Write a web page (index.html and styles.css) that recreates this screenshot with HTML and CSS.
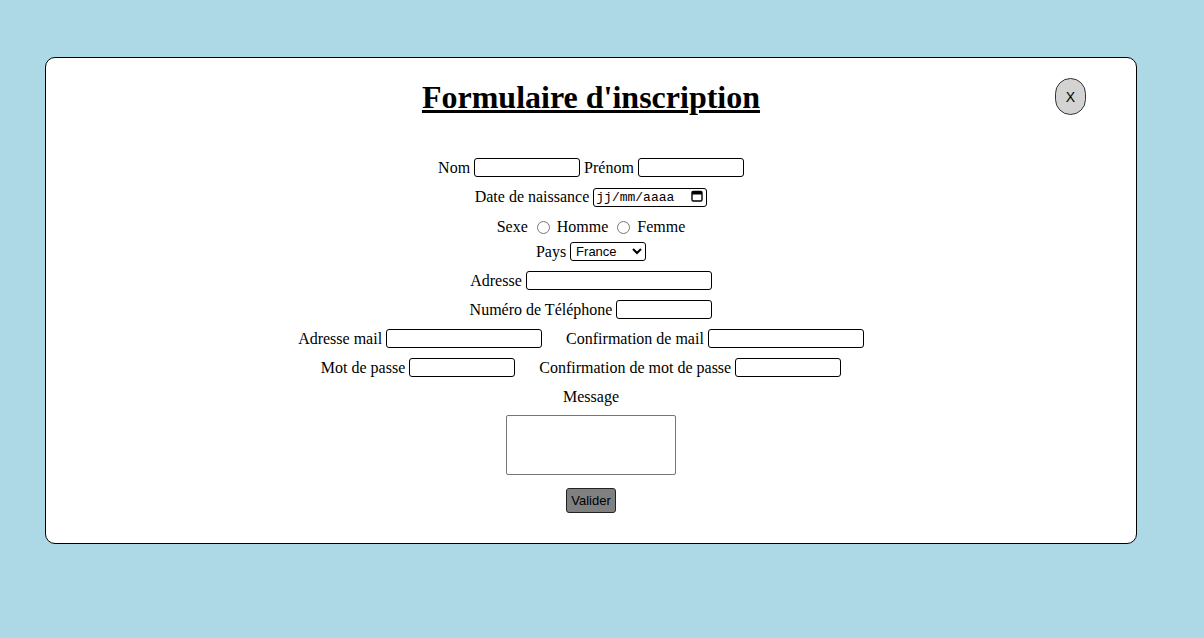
FILE: index.html
```html
<!DOCTYPE html>
<html lang="fr">
<head>
<meta charset="utf-8">
<title>Formulaire d'inscription</title>
<link rel="stylesheet" href="styles.css">
</head>
<body>
<div class="modal">
  <button class="close" type="button">X</button>
  <h1 class="title">Formulaire d'inscription</h1>
  <form class="form">
    <div class="row">
      <label for="nom">Nom</label><input id="nom" class="field w106" type="text">
      <label for="prenom">Prénom</label><input id="prenom" class="field w106" type="text">
    </div>
    <div class="row">
      <label for="naissance">Date de naissance</label>
      <span class="date-field">
        <input id="naissance" class="field date-input" type="text" value="jj/mm/aaaa">
        <svg class="cal" width="12" height="12" viewBox="0 0 12 12" aria-hidden="true"><rect x="1" y="1.5" width="10" height="9.5" rx="1.2" fill="none" stroke="#000" stroke-width="1.4"/><rect x="1" y="1.5" width="10" height="3" fill="#000"/></svg>
      </span>
    </div>
    <div class="row row-sexe">
      <span>Sexe</span>
      <input type="radio" name="sexe" id="homme"><label for="homme">Homme</label>
      <input type="radio" name="sexe" id="femme"><label for="femme">Femme</label>
    </div>
    <div class="row row-pays">
      <label for="pays">Pays</label>
      <select id="pays" class="select"><option>France</option><option>Belgique</option><option>Suisse</option></select>
    </div>
    <div class="row">
      <label for="adresse">Adresse</label><input id="adresse" class="field w186" type="text">
    </div>
    <div class="row">
      <label for="tel">Numéro de Téléphone</label><input id="tel" class="field w96" type="tel">
    </div>
    <div class="row">
      <label for="mail">Adresse mail</label><input id="mail" class="field w156" type="email">
      <label for="mail2" class="spaced">Confirmation de mail</label><input id="mail2" class="field w156 trail" type="email">
    </div>
    <div class="row">
      <label for="mdp">Mot de passe</label><input id="mdp" class="field w106" type="password">
      <label for="mdp2" class="spaced">Confirmation de mot de passe</label><input id="mdp2" class="field w106 trail" type="password">
    </div>
    <div class="row">
      <label for="message">Message</label>
    </div>
    <div class="row-area">
      <textarea id="message" class="area"></textarea>
    </div>
    <div class="row-btn">
      <button type="submit" class="submit">Valider</button>
    </div>
  </form>
</div>
</body>
</html>
```
FILE: styles.css
```css
html, body {
  margin: 0;
  padding: 0;
}
body {
  background: #add8e6;
  font-family: "Liberation Serif", "Times New Roman", serif;
  font-size: 16px;
  color: #000;
}
.modal {
  position: relative;
  box-sizing: border-box;
  width: 1092px;
  height: 487px;
  margin: 57px 0 0 45px;
  background: #fff;
  border: 1px solid #000;
  border-radius: 10px;
}
.close {
  position: absolute;
  top: 20px;
  right: 50px;
  width: 31px;
  height: 37px;
  padding: 0;
  background: #d3d3d3;
  border: 1px solid #333;
  border-radius: 16px;
  font-family: "Liberation Sans", Arial, sans-serif;
  font-size: 14px;
  color: #000;
}
.title {
  margin: 21px 0 0;
  font-size: 32px;
  font-weight: bold;
  text-align: center;
  text-decoration: underline;
  line-height: 37px;
}
.form {
  margin-top: 41px;
  display: flex;
  flex-direction: column;
  align-items: center;
}
.row {
  display: flex;
  justify-content: center;
  align-items: center;
  gap: 4px;
  height: 21px;
  margin-bottom: 8px;
  white-space: nowrap;
}
.row-sexe {
  height: 22px;
  margin-top: 1px;
  margin-bottom: 3px;
}
.row-sexe input[type="radio"] {
  width: 13px;
  height: 13px;
  margin: 0 3px 0 5px;
}
.spaced {
  margin-left: 20px;
}
.trail {
  margin-right: 20px;
}
.field {
  box-sizing: border-box;
  height: 19px;
  padding: 1px 3px;
  border: 1px solid #000;
  border-radius: 3px;
  font-family: "Liberation Sans", Arial, sans-serif;
  font-size: 13px;
  background: #fff;
}
.w96 { width: 96px; }
.w106 { width: 106px; }
.w156 { width: 156px; }
.w186 { width: 186px; }
.date-field {
  position: relative;
  display: inline-block;
  height: 19px;
}
.date-input {
  width: 114px;
  font-family: "Liberation Mono", "Courier New", monospace;
  font-size: 13px;
  padding-left: 2px;
  color: #000;
}
.cal {
  position: absolute;
  top: 3px;
  right: 4px;
}
.select {
  box-sizing: border-box;
  width: 76px;
  height: 19px;
  padding: 0 0 0 1px;
  border: 1px solid #000;
  border-radius: 3px;
  font-family: "Liberation Sans", Arial, sans-serif;
  font-size: 13px;
  background: #fff;
  color: #000;
}
.row-area {
  margin-top: 0;
}
.area {
  display: block;
  box-sizing: border-box;
  width: 170px;
  height: 60px;
  border: 1px solid #767676;
  border-radius: 2px;
  resize: none;
  margin: 0;
}
.row-btn {
  margin-top: 13px;
}
.submit {
  box-sizing: border-box;
  width: 50px;
  height: 25px;
  padding: 0;
  background: #808080;
  border: 1px solid #222;
  border-radius: 3px;
  font-family: "Liberation Sans", Arial, sans-serif;
  font-size: 13px;
  color: #000;
}
```
